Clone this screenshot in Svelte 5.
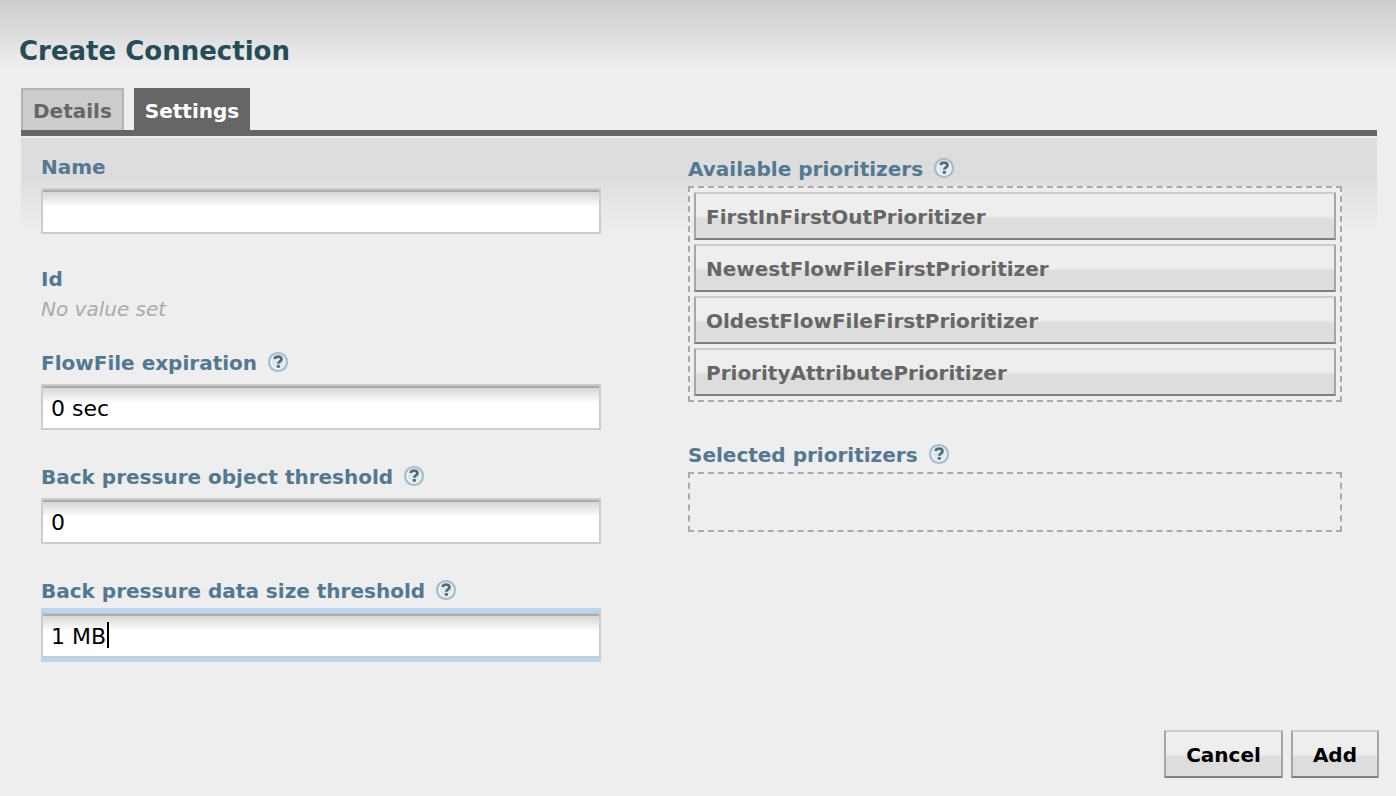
<script lang="ts">
  let name = $state('');
  let expiration = $state('0 sec');
  let objectThreshold = $state('0');
  let sizeThreshold = $state('1 MB');

  const available = [
    'FirstInFirstOutPrioritizer',
    'NewestFlowFileFirstPrioritizer',
    'OldestFlowFileFirstPrioritizer',
    'PriorityAttributePrioritizer'
  ];
</script>

{#snippet help()}
  <svg class="help" viewBox="0 0 20 20" aria-hidden="true">
    <rect width="20" height="20" rx="9.200" fill="#a5c0cf" />
    <circle cx="10" cy="10" r="7.700" fill="#f5f9fb" />
    <circle cx="10" cy="10" r="6.300" fill="#dfe8ed" />
    <path d="M6.500 7C6.900 5.300 8.300 4.700 10 4.700c2.100 0 3.500.8 3.500 2.500 0 2.100-3.200 2.200-3.200 4.600" fill="none" stroke="#526b77" stroke-width="2.700" />
    <rect x="8.800" y="13" width="3" height="2.800" fill="#526b77" />
  </svg>
{/snippet}

<main class="dialog">
  <h1>Create Connection</h1>

  <div class="tabs" role="tablist">
    <button class="tab" type="button" role="tab" aria-selected="false">Details</button>
    <button class="tab selected" type="button" role="tab" aria-selected="true">Settings</button>
  </div>

  <div class="panel" role="tabpanel">
    <div class="column">
      <div class="field">
        <label class="heading" for="name">Name</label>
        <input id="name" type="text" bind:value={name} />
      </div>
      <div class="readonly">
        <div class="heading">Id</div>
        <div class="unset">No value set</div>
      </div>
      <div class="field">
        <label class="heading" for="expiration">FlowFile expiration {@render help()}</label>
        <input id="expiration" type="text" bind:value={expiration} />
      </div>
      <div class="field">
        <label class="heading" for="objects">Back pressure object threshold {@render help()}</label>
        <input id="objects" type="text" bind:value={objectThreshold} />
      </div>
      <div class="field">
        <label class="heading" for="size">Back pressure data size threshold {@render help()}</label>
        <div class="active">
          <input id="size" type="text" bind:value={sizeThreshold} />
          <span class="caret"></span>
        </div>
      </div>
    </div>

    <div class="column prioritizers">
      <section>
        <h2 class="heading">Available prioritizers {@render help()}</h2>
        <ul>
          {#each available as item}
            <li>{item}</li>
          {/each}
        </ul>
      </section>
      <section>
        <h2 class="heading">Selected prioritizers {@render help()}</h2>
        <ul></ul>
      </section>
    </div>
  </div>

  <footer>
    <button class="action" type="button">Cancel</button>
    <button class="action" type="button">Add</button>
  </footer>
</main>

<style>
  :global(body) {
    margin: 0;
    background: #eee;
  }
  .dialog, .dialog * {
    box-sizing: border-box;
  }
  .dialog {
    display: flex;
    flex-direction: column;
    min-height: 100vh;
    padding: 34px 17px 18px 21px;
    background: linear-gradient(#cdcdcd, #eee 68px);
    font-family: Verdana, "DejaVu Sans", sans-serif;
    font-size: 20px;
  }
  h1 {
    margin: 0 0 20px -2px;
    color: #264c58;
    font-size: 26px;
    line-height: 34px;
  }
  button, input {
    font: inherit;
  }
  .tabs {
    display: flex;
    gap: 10px;
    margin-right: 2px;
    border-bottom: 6px solid #666;
  }
  .tab {
    height: 42px;
    padding: 2px 10px 0;
    border: 2px solid #b3b3b3;
    border-bottom: 0;
    background: #ccc;
    color: #666;
    font-weight: bold;
  }
  .tab.selected {
    padding: 2px 9px 0;
    border-color: #666;
    background: #666;
    color: #fff;
  }
  .panel {
    display: grid;
    grid-template-columns: 560fr 654fr;
    gap: 87px;
    margin: 2px 2px 0 0;
    padding: 14px 35px 0 20px;
    background: linear-gradient(#ddd 38px, #eee 92px);
  }
  .column {
    display: flex;
    flex-direction: column;
    gap: 32px;
    min-width: 0;
  }
  .prioritizers {
    gap: 38px;
    padding-top: 2px;
  }
  .heading {
    display: flex;
    align-items: center;
    gap: 11px;
    margin: 0;
    color: #527991;
    font-size: 20px;
    font-weight: bold;
    line-height: 30px;
  }
  .help {
    flex: none;
    width: 20px;
    height: 20px;
    margin-bottom: 2px;
  }
  .field {
    display: flex;
    flex-direction: column;
    gap: 6px;
  }
  .readonly {
    margin: -2px 0 -8px;
  }
  .unset {
    color: #aaa;
    font-style: italic;
    line-height: 30px;
  }
  input {
    display: block;
    width: 100%;
    height: 46px;
    padding: 2px 8px 0;
    border: 2px solid #ccc;
    border-radius: 0;
    outline: 0;
    background: linear-gradient(#a0a0a0, #b4b4b4 2px, #d6d6d6 2px, #fff 17px);
    color: #000;
    font-size: 22px;
  }
  .active {
    position: relative;
    box-shadow: 0 -4px #b7d6f4, 0 4px #b7d6f4;
  }
  .caret {
    position: absolute;
    top: 10px;
    left: 66px;
    width: 2px;
    height: 26px;
    background: #000;
  }
  ul {
    display: flex;
    flex-direction: column;
    gap: 4px;
    min-height: 60px;
    margin: 2px 0 0;
    padding: 4px;
    border: 2px dashed #aaa;
    background: #eee;
    list-style: none;
  }
  li, .action {
    height: 48px;
    border: 2px solid;
    border-color: #ccc #a6a6a6 #808080;
    background: linear-gradient(#eee 22px, #ddd 25px);
    font-weight: bold;
  }
  li {
    padding: 0 10px;
    color: #666;
    line-height: 46px;
  }
  footer {
    display: flex;
    justify-content: flex-end;
    gap: 8px;
    margin-top: auto;
    padding-top: 24px;
  }
  .action {
    padding: 2px 20px 0;
    color: #000;
  }
</style>
